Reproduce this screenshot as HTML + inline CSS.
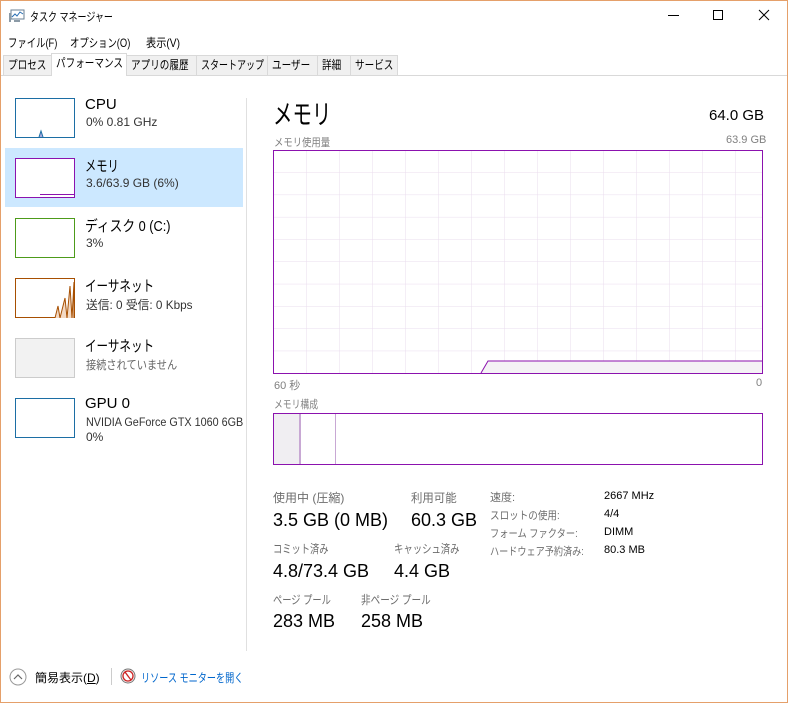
<!DOCTYPE html>
<html><head><meta charset="utf-8"><style>
*{margin:0;padding:0;box-sizing:border-box}
body{width:788px;height:703px;overflow:hidden;background:#fff;font-family:"Liberation Sans","Noto Sans CJK JP",sans-serif;color:#000;position:relative}
.a{position:absolute;white-space:nowrap;transform-origin:0 50%}
.win{position:absolute;left:0;top:0;width:788px;height:703px;border:1px solid #e5a06a}
.tab{position:absolute;top:55px;height:20px;font-size:12px;line-height:19px;padding:0 0 0 4px;border:1px solid #d9d9d9;border-bottom:none;background:#f0f0f0;white-space:nowrap;overflow:hidden}
.tab span{display:inline-block;transform:scaleX(0.8);transform-origin:0 50%}
.thumb{position:absolute;left:15px;width:60px;height:40px;border:1px solid}
.t1{font-size:15px}
.t2{font-size:12px;color:#333}
.lbl{font-size:12px;color:#6d6d6d}
.big{font-size:18px}
.g{font-size:11px;color:#808080}
</style></head><body>
<div class="win"></div>
<svg class="a" style="left:8px;top:8px" width="18" height="16"><rect x="3" y="2" width="13" height="9" fill="#fff" stroke="#6a7f93"/><polyline points="4,9 7,6 9,8 12,4 15,6" fill="none" stroke="#2a6fb3"/><rect x="1" y="5" width="2" height="9" fill="#8b9aa6"/><rect x="6" y="12" width="6" height="2" fill="#8b9aa6"/></svg>
<div class="a" style="left:30px;top:8px;font-size:12px;transform:scaleX(0.75)">タスク マネージャー</div>
<div class="a" style="left:668px;top:15px;width:11px;height:1px;background:#000"></div>
<div class="a" style="left:713px;top:10px;width:10px;height:10px;border:1px solid #000"></div>
<svg class="a" style="left:758px;top:9px" width="12" height="12"><path d="M1 1L11 11M11 1L1 11" stroke="#000" stroke-width="1"/></svg>
<div class="a" style="left:8px;top:34px;font-size:12px;transform:scaleX(0.78)">ファイル(F)</div>
<div class="a" style="left:70px;top:34px;font-size:12px;transform:scaleX(0.78)">オプション(O)</div>
<div class="a" style="left:146px;top:34px;font-size:12px;transform:scaleX(0.85)">表示(V)</div>
<div class="a" style="left:1px;top:51px;width:786px;height:24px;background:#fff"></div>
<div class="a" style="left:1px;top:75px;width:786px;height:1px;background:#d9d9d9"></div>
<div class="tab" style="left:3px;width:49px"><span>プロセス</span></div>
<div class="tab" style="left:51px;top:53px;height:23px;width:76px;background:#fff;z-index:2"><span>パフォーマンス</span></div>
<div class="tab" style="left:126px;width:71px"><span>アプリの履歴</span></div>
<div class="tab" style="left:196px;width:72px"><span style="transform:scaleX(0.75)">スタートアップ</span></div>
<div class="tab" style="left:267px;width:51px"><span>ユーザー</span></div>
<div class="tab" style="left:317px;width:34px"><span>詳細</span></div>
<div class="tab" style="left:350px;width:48px"><span>サービス</span></div>
<div class="a" style="left:5px;top:148px;width:238px;height:59px;background:#cce8ff"></div>
<div class="thumb" style="top:98px;border-color:#1c6ea4"></div>
<svg class="a" style="left:15px;top:98px" width="60" height="40"><polyline points="24,39 26,33 28,39" fill="#aad" stroke="#1c6ea4"/></svg>
<div class="a t1" style="left:85px;top:96px">CPU</div><div class="a t2" style="left:86px;top:115px">0% 0.81 GHz</div>
<div class="thumb" style="top:158px;border-color:#8b12ae;background:#fff"></div>
<div class="a" style="left:40px;top:194px;width:34px;height:1px;background:#8b12ae"></div>
<div class="a t1" style="left:85px;top:155px;transform:scaleX(0.75)">メモリ</div><div class="a t2" style="left:86px;top:176px">3.6/63.9 GB (6%)</div>
<div class="thumb" style="top:218px;border-color:#4d9b1a"></div>
<div class="a t1" style="left:85px;top:215px;transform:scaleX(0.85)">ディスク 0 (C:)</div><div class="a t2" style="left:86px;top:236px">3%</div>
<div class="thumb" style="top:278px;border-color:#a74f01"></div>
<svg class="a" style="left:15px;top:278px" width="60" height="40"><polyline points="40,40 43,28 45,40 50,20 52,40 55,8 57,40 59,4 59,40" fill="#f3d9c4" stroke="#a74f01"/></svg>
<div class="a t1" style="left:85px;top:275px;transform:scaleX(0.77)">イーサネット</div><div class="a t2" style="left:86px;top:296px;transform:scaleX(0.98)">送信: 0 受信: 0 Kbps</div>
<div class="thumb" style="top:338px;border-color:#ccc;background:#f2f2f2"></div>
<div class="a t1" style="left:85px;top:335px;transform:scaleX(0.77)">イーサネット</div><div class="a t2" style="left:86px;top:356px;color:#666;transform:scaleX(0.85)">接続されていません</div>
<div class="thumb" style="top:398px;border-color:#1c6ea4"></div>
<div class="a t1" style="left:85px;top:395px">GPU 0</div><div class="a t2" style="left:86px;top:415px;transform:scaleX(0.9)">NVIDIA GeForce GTX 1060 6GB</div><div class="a t2" style="left:86px;top:430px">0%</div>
<div class="a" style="left:246px;top:98px;width:1px;height:553px;background:#e0e0e0"></div>
<div class="a" style="left:273px;top:93px;font-size:27px;transform:scaleX(0.72)">メモリ</div>
<div class="a" style="left:709px;top:107px;font-size:15px">64.0 GB</div>
<div class="a g" style="left:274px;top:134px;transform:scaleX(0.85)">メモリ使用量</div>
<div class="a g" style="left:726px;top:134px">63.9 GB</div>
<svg class="a" style="left:273px;top:150px" width="490" height="224">
<defs><pattern id="p" width="33" height="22.3" patternUnits="userSpaceOnUse"><path d="M0 0V22.3M0 0H33" stroke="#eadcee" fill="none"/></pattern></defs>
<rect x="0" y="0" width="490" height="224" fill="url(#p)"/>
<polygon points="208,223 215,211 489,211 489,223" fill="#f4f2f5"/>
<polyline points="208,223 215,211 489,211" fill="none" stroke="#8b12ae"/>
<rect x="0.5" y="0.5" width="489" height="223" fill="none" stroke="#8b12ae"/>
</svg>
<div class="a g" style="left:274px;top:377px">60 秒</div>
<div class="a g" style="left:756px;top:377px">0</div>
<div class="a g" style="left:274px;top:396px;transform:scaleX(0.8)">メモリ構成</div>
<div class="a" style="left:273px;top:413px;width:490px;height:52px;border:1px solid #8b12ae"></div>
<div class="a" style="left:274px;top:414px;width:27px;height:50px;background:#f0eef2;border-right:2px solid #c8a8d4"></div>
<div class="a" style="left:335px;top:414px;width:1px;height:50px;background:#c8a8d4"></div>
<div class="a lbl" style="left:273px;top:489px">使用中 (圧縮)</div>
<div class="a big" style="left:273px;top:510px">3.5 GB (0 MB)</div>
<div class="a lbl" style="left:411px;top:489px;transform:scaleX(0.95)">利用可能</div>
<div class="a big" style="left:411px;top:510px">60.3 GB</div>
<div class="a lbl" style="left:273px;top:540px;transform:scaleX(0.77)">コミット済み</div>
<div class="a big" style="left:273px;top:561px">4.8/73.4 GB</div>
<div class="a lbl" style="left:394px;top:540px;transform:scaleX(0.78)">キャッシュ済み</div>
<div class="a big" style="left:394px;top:561px">4.4 GB</div>
<div class="a lbl" style="left:273px;top:591px;transform:scaleX(0.77)">ページ プール</div>
<div class="a big" style="left:273px;top:611px">283 MB</div>
<div class="a lbl" style="left:361px;top:591px;transform:scaleX(0.8)">非ページ プール</div>
<div class="a big" style="left:361px;top:611px">258 MB</div>
<div class="a lbl" style="left:490px;top:489px;font-size:11px">速度:</div>
<div class="a lbl" style="left:490px;top:507px;font-size:11px;transform:scaleX(0.87)">スロットの使用:</div>
<div class="a lbl" style="left:490px;top:525px;font-size:11px;transform:scaleX(0.84)">フォーム ファクター:</div>
<div class="a lbl" style="left:490px;top:543px;font-size:11px;transform:scaleX(0.83)">ハードウェア予約済み:</div>
<div class="a" style="left:604px;top:490px;font-size:11px">2667 MHz</div>
<div class="a" style="left:604px;top:508px;font-size:11px">4/4</div>
<div class="a" style="left:604px;top:526px;font-size:11px">DIMM</div>
<div class="a" style="left:604px;top:544px;font-size:11px">80.3 MB</div>
<svg class="a" style="left:9px;top:668px" width="18" height="18"><circle cx="9" cy="9" r="8" fill="#fff" stroke="#999"/><polyline points="5,11 9,7 13,11" fill="none" stroke="#666" stroke-width="1.2"/></svg>
<div class="a" style="left:35px;top:669px;font-size:12px">簡易表示(<u>D</u>)</div>
<div class="a" style="left:111px;top:668px;width:1px;height:17px;background:#ccc"></div>
<svg class="a" style="left:120px;top:668px" width="16" height="16"><circle cx="8" cy="8" r="7" fill="#f4f0f0" stroke="#777"/><circle cx="8" cy="8" r="5" fill="#fff" stroke="#c22" stroke-width="1.3"/><path d="M5 4L11 12" stroke="#c22" stroke-width="1.3"/></svg>
<div class="a" style="left:141px;top:669px;font-size:12px;color:#0066cc;transform:scaleX(0.76)">リソース モニターを開く</div>
</body></html>
